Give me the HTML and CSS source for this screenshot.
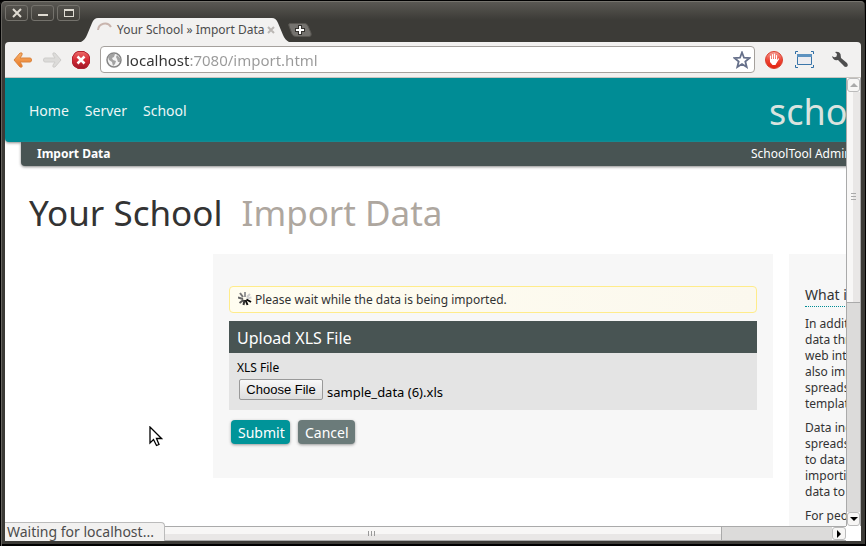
FILE: index.html
```html
<!DOCTYPE html>
<html lang="en">
<head>
<meta charset="utf-8">
<meta name="viewport" content="width=device-width, initial-scale=1">
<title>Your School » Import Data</title>
<link rel="stylesheet" href="styles.css">
</head>
<body>
<div class="window">
  <header class="titlebar">
    <div class="window-controls">
      <button type="button" aria-label="Close window"><svg width="10" height="10" viewBox="0 0 10 10"><path d="M1 1 9 9M9 1 1 9" stroke="#dfdbd2" stroke-width="2"/></svg></button>
      <button type="button" aria-label="Minimize window"><svg width="10" height="10" viewBox="0 0 10 10"><path d="M0 7H10" stroke="#dfdbd2" stroke-width="2"/></svg></button>
      <button type="button" aria-label="Maximize window"><svg width="10" height="10" viewBox="0 0 10 10"><path d="M0 1H10V9H0Z" fill="#dfdbd2"/><path d="M1 3H9V8H1Z" fill="#45433e"/></svg></button>
    </div>
    <div class="tab">
      <svg class="tab-shape" viewBox="0 0 210 24" preserveAspectRatio="none"><path d="M0 24Q4 22 6 17L11 5Q13 0 17 0H191Q195 0 197 5L202 17Q204 22 208 24Z" fill="#f2f1f0"/></svg>
      <svg class="tab-spinner" width="16" height="16" viewBox="0 0 16 16"><path d="M1 8A7 7 0 0 1 14 5" fill="none" stroke="#c9b5ae" stroke-width="2"/></svg>
      <span class="tab-title">Your School » Import Data</span>
      <button type="button" class="tab-close" aria-label="Close tab"><svg width="8" height="8" viewBox="0 0 8 8"><path d="M1 1 7 7M7 1 1 7" stroke="#bbb7b4" stroke-width="2"/></svg></button>
    </div>
    <button type="button" class="new-tab" aria-label="New tab"><svg width="24" height="14" viewBox="0 0 24 14"><path d="M2 .5H17Q19 .5 20 3L23 10Q24 13.500 21 13.500H8Q5 13.500 4 11L1 3Q0 .5 2 .5Z" fill="#75736f" stroke="#595752"/><path d="M12 2V12M7 7H17" stroke="#34322e" stroke-width="4"/><path d="M12 3V11M8 7H16" stroke="#fff" stroke-width="2"/></svg></button>
  </header>
  <nav class="toolbar" aria-label="Browser">
    <button type="button" aria-label="Back"><svg width="20" height="18" viewBox="0 0 20 18"><defs><linearGradient id="or" x1="0" y1="0" x2="0" y2="1"><stop offset="0" stop-color="#f9b26d"/><stop offset="1" stop-color="#e87722"/></linearGradient></defs><path d="M1 9 7 2Q10 1 9 4L7 7H17Q18.500 7 18.500 9T17 11H7L9 14Q10 17 7 16Z" fill="url(#or)" stroke="#d9843f"/></svg></button>
    <button type="button" aria-label="Forward"><svg width="20" height="18" viewBox="0 0 20 18"><path d="M19 9 13 2Q10 1 11 4L13 7H3Q1.500 7 1.500 9T3 11H13L11 14Q10 17 13 16Z" fill="#dcdbd9" stroke="#cecdcb"/></svg></button>
    <button type="button" aria-label="Stop"><svg width="20" height="20" viewBox="0 0 20 20"><defs><linearGradient id="rd" x1="0" y1="0" x2="0" y2="1"><stop offset="0" stop-color="#ed6b69"/><stop offset=".5" stop-color="#d52b36"/><stop offset="1" stop-color="#9e1828"/></linearGradient></defs><path d="M7 1.500H13Q18.500 4 18.500 7V13Q16 18.500 13 18.500H7Q1.500 16 1.500 13V7Q4 1.500 7 1.500Z" fill="url(#rd)" stroke="#b32431" stroke-linejoin="round"/><path d="M6.500 6.500 13.500 13.500M13.500 6.500 6.500 13.500" stroke="#fff" stroke-width="2.500"/></svg></button>
    <div class="address">
      <svg width="16" height="16" viewBox="0 0 16 16"><circle cx="8" cy="8" r="7" fill="#f3f3f3" stroke="#858585" stroke-width="1.500"/><path d="M2 5 5 2 9 2 8 5 6 6 7 8 10 9 9 12 7 14 6 10 3 8ZM11 3 14 6 14 10 12 10 11 7 10 5Z" fill="#a2a2a2"/></svg>
      <input type="text" aria-label="Address" value="localhost:7080/import.html">
      <button type="button" aria-label="Bookmark this page"><svg width="18" height="18" viewBox="0 0 18 18"><path d="M9 1.500 11 6.700 16.500 7 12.300 10.500 13.700 16 9 13 4.300 16 5.700 10.500 1.500 7 7 6.700Z" fill="#fff" stroke="#66708a" stroke-width="1.800"/></svg></button>
    </div>
    <button type="button" class="extension" aria-label="Ad blocker"><svg width="18" height="18" viewBox="0 0 18 18"><defs><linearGradient id="ab" x1="0" y1="0" x2="0" y2="1"><stop offset="0" stop-color="#f5a49c"/><stop offset=".5" stop-color="#ee4536"/><stop offset="1" stop-color="#e3200d"/></linearGradient></defs><circle cx="9" cy="9" r="8.500" fill="url(#ab)" stroke="#d9412f"/><path d="M5.500 5V9M7.500 3.500V9M9.500 3V9M11.500 4.500V9M13.500 8 11.500 11" stroke="#fff" stroke-width="1.200" stroke-linecap="round"/><path d="M5 8H12V11L10.500 14H7.500L5 11Z" fill="#fff"/></svg></button>
    <button type="button" class="extension" aria-label="Screen capture"><svg width="19" height="17" viewBox="0 0 19 17"><path d="M.5 3V.5H3M16 .5H18.500V3M18.500 14V16.500H16M3 16.500H.5V14" fill="none" stroke="#2f6ea5"/><path d="M2.500 3.500H16.500V13.500H2.500Z" fill="#ececf0" stroke="#3b76a9"/><path d="M2 3H17V6H2Z" fill="#5d92bf"/></svg></button>
    <button type="button" class="wrench" aria-label="Settings"><svg width="18" height="17" viewBox="0 0 18 17"><path d="M1 5Q3 7 5.500 5.500L6 3 4 1Q8 0 9.500 3L10 7 16 12Q18 15 15 16 13 16 12 14L7 9Q2 10 1 5Z" fill="#4e4e4e"/></svg></button>
  </nav>
  <div class="viewport">
    <div class="page">
      <header class="site-header">
        <nav class="site-nav" aria-label="Site"><a href="#">Home</a><a href="#">Server</a><a href="#">School</a></nav>
        <span class="brand">scho</span>
      </header>
      <div class="breadcrumbs"><strong>Import Data</strong><span>SchoolTool Admin</span></div>
      <h1>Your School <span>Import Data</span></h1>
      <div class="columns">
        <main class="panel">
          <p class="notice"><svg width="14" height="14" viewBox="0 0 14 14" fill="none" stroke-width="2"><path d="M7 5V0" stroke="#999"/><path d="M5 5 2 1" stroke="#777"/><path d="M9 5 12 2" stroke="#ccc"/><path d="M8.500 6.500 13.500 5.500" stroke="#d4d4d4"/><path d="M5 7 0 5.500" stroke="#666"/><path d="M5.500 8 1.500 11" stroke="#555"/><path d="M6.500 8 5.500 13" stroke="#333"/><path d="M7.500 8 9.500 13" stroke="#111"/><path d="M8.500 7.500 13 10" stroke="#000"/></svg>Please wait while the data is being imported.</p>
          <form>
            <h2>Upload XLS File</h2>
            <div class="fields">
              <label for="xls">XLS File</label>
              <div class="file-row"><input id="xls" class="file-input" type="file"><button type="button" class="choose">Choose File</button><span>sample_data (6).xls</span></div>
            </div>
            <div class="actions"><button type="submit" class="submit">Submit</button><button type="button" class="cancel">Cancel</button></div>
          </form>
        </main>
        <aside class="help">
          <h3>What i</h3>
          <p>In addit<br>data thr<br>web int<br>also imp<br>spreads<br>templat</p>
          <p>Data inc<br>spreads<br>to data<br>importi<br>data to</p>
          <p>For peo</p>
        </aside>
      </div>
    </div>
    <div class="vscroll" aria-hidden="true">
      <div class="arrow"><svg width="8" height="4" viewBox="0 0 8 4"><path d="M4 0 8 4H0Z" fill="#aaa"/></svg></div>
      <div class="vthumb"><i></i><i></i><i></i></div>
      <div class="vtrack"></div>
      <div class="arrow"><svg width="8" height="4" viewBox="0 0 8 4"><path d="M0 0H8L4 4Z"/></svg></div>
    </div>
    <div class="hscroll" aria-hidden="true">
      <div class="hthumb"><i></i><i></i><i></i></div>
      <div class="htrack"></div>
      <div class="arrow"><svg width="4" height="8" viewBox="0 0 4 8"><path d="M0 0 4 4 0 8Z"/></svg></div>
    </div>
    <div class="status" role="status">Waiting for localhost...</div>
    <svg class="pointer" width="14" height="21" viewBox="0 0 14 21"><path d="M1 1V17L4.500 13.500 7.500 19.500 10 18.500 7.500 12.500H12.500Z" fill="#fff" stroke="#000" stroke-width="1.300"/></svg>
  </div>
</div>
</body>
</html>
```
FILE: styles.css
```css
* { box-sizing: border-box; }
html, body { height: 100%; }
body { margin: 0; background: #000; color: #333; font-family: "Noto Sans", "Liberation Sans", sans-serif; font-size: 12px; line-height: 16px; overflow: hidden; }
button, input { font: inherit; }
button { padding: 0; border: 0; background: none; }
svg { display: block; flex: none; }
h1, h2, h3, p { margin: 0; font-weight: 400; }

.window { display: flex; flex-direction: column; height: 100vh; padding: 0 4px 5px 5px; background: #3c3b37; border: solid #000; border-width: 1px 1px 0 0; border-radius: 5px 5px 0 0; box-shadow: inset 1px 0 #000, inset 2px 1px #65635e, inset 0 -2px #000; }
.titlebar { display: flex; flex: none; height: 41px; margin: 0 -3px; padding-left: 3px; background: linear-gradient(#5a5853, #3c3b37 18px); border-top: 1px solid #76746e; border-radius: 4px 4px 0 0; }
.window-controls { display: flex; gap: 3px; padding-top: 3px; }
.window-controls button { display: grid; place-items: center; width: 23px; height: 16px; border: 1px solid #74726c; border-radius: 3px; background: linear-gradient(#54524d, #413f3a); }
.tab { position: relative; display: flex; align-items: center; width: 210px; height: 24px; margin: 16px 0 0 1px; padding: 0 16px; color: #4c4c4c; }
.tab-shape { position: absolute; inset: 0; width: 100%; height: 100%; }
.tab-spinner, .tab-title, .tab-close { position: relative; }
.tab-title { flex: 1; margin-left: 4px; white-space: nowrap; }
.new-tab { align-self: flex-start; margin-top: 21px; margin-left: -3px; }
.toolbar { display: flex; flex: none; align-items: center; height: 36px; padding-left: 8px; background: #f2f1f0; border-bottom: 1px solid #c9c5c0; border-radius: 4px 4px 0 0; }
.toolbar > button { margin-right: 9px; }
.address { display: flex; flex: 1; align-items: center; min-width: 0; height: 27px; margin-right: 10px; padding: 0 3px 0 5px; background: #fff; border: 1px solid #a5a19d; border-radius: 4px; }
.address input { flex: 1; min-width: 0; margin-left: 4px; padding: 0; border: 0; outline: 0; background: linear-gradient(90deg, #333 64px, #999 64px); background-clip: text; color: transparent; font-size: 15px; line-height: 20px; }
.toolbar .extension { margin-right: 12px; }
.toolbar .wrench { margin: 0 12px 0 5px; }

.viewport { position: relative; display: grid; flex: 1; grid-template: minmax(0, 1fr) 15px / minmax(0, 1fr) 15px; min-height: 0; background: #fff; }
.page { overflow: hidden; background: #fff; }
.site-header { display: flex; align-items: center; justify-content: space-between; height: 64px; min-width: 1000px; padding-left: 24px; background: #008c95; border-radius: 0 0 4px 4px; box-shadow: 0 1px 3px #888; }
.site-nav { display: flex; gap: 16px; padding-top: 2px; font-size: 14px; }
.site-nav a { color: #eef6f5; text-decoration: none; }
.brand { width: 236px; padding-top: 4px; color: #d9e3df; font-size: 36px; line-height: 48px; white-space: nowrap; }
.breadcrumbs { display: flex; align-items: center; justify-content: space-between; height: 24px; min-width: 960px; margin-left: 16px; padding-left: 16px; background: #485453; color: #fff; border-radius: 0 0 4px 4px; box-shadow: 0 1px 3px #888; }
.breadcrumbs span { width: 230px; white-space: nowrap; }
h1 { padding: 23px 24px 17px; color: #333; font-size: 35px; line-height: 48px; white-space: nowrap; }
h1 span { margin-left: 10px; color: #aea79f; }
.columns { display: grid; grid-template-columns: 560px 192px; gap: 16px; min-width: 976px; padding-left: 208px; align-items: start; }
.panel { padding: 32px 16px; background: #f7f7f7; }
.notice { display: flex; align-items: center; gap: 3px; height: 27px; padding: 1px 8px 0; background: linear-gradient(90deg, #fffdf0, #fbf8ee); border: 1px solid #ffec8b; border-radius: 4px; }
.notice svg { align-self: flex-start; margin-top: 4px; }
h2 { margin-top: 8px; padding: 5px 8px 3px; background: #485453; color: #fff; font-size: 16px; line-height: 24px; }
.fields { height: 57px; padding: 7px 8px; background: #e4e4e4; color: #000; }
.fields label { display: block; }
.file-row { display: flex; align-items: center; gap: 4px; height: 26px; margin: 1px 2px; }
.file-input { position: absolute; width: 1px; height: 1px; opacity: 0; }
.choose { flex: none; width: 84px; height: 21px; align-self: flex-start; margin-top: 2px; background: linear-gradient(#f8f8f8, #ddd); border: 1px solid #999; border-radius: 2px; font-family: "Liberation Sans", sans-serif; font-size: 13px; }
.file-row span { padding-top: 4px; font-size: 13px; }
.actions { display: flex; gap: 8px; padding: 10px 2px 2px; }
.actions button { height: 24px; padding: 1px 7px 0; border-radius: 4px; color: #fff; font-size: 14px; box-shadow: 0 1px 3px #999; }
.submit { background: #009499; }
.cancel { background: #6b7b7a; }
.actions .submit { width: 59px; }
.actions .cancel { width: 57px; }
.help { min-height: 300px; padding: 32px 16px; background: #f7f7f7; }
.help h3 { padding-bottom: 2px; border-bottom: 1px dotted #008c95; font-size: 14px; line-height: 18px; }
.help p { margin-top: 8px; }
.help h3 + p { margin-top: 9px; }

.vscroll { display: flex; grid-row: 1; grid-column: 2; flex-direction: column; border: solid #aaa; border-width: 0 1px; }
.arrow { display: grid; flex: none; place-items: center; width: 13px; height: 14px; background: #f7f6f5; border: 1px solid #bbb; border-radius: 3px; }
.vthumb { display: flex; flex: 210; flex-direction: column; align-items: center; justify-content: center; gap: 2px; background: linear-gradient(90deg, #f8f7f6 50%, #e9e7e6 50%); border-bottom: 1px solid #aaa; }
.vthumb i { width: 5px; height: 1px; background: #aaa; }
.vtrack { flex: 210; background: #dcdbda; }
.hscroll { display: flex; grid-row: 2; grid-column: 1; border: solid #aaa; border-width: 1px 0; }
.hthumb { display: flex; flex: 714; align-items: center; justify-content: center; gap: 2px; padding-left: 16px; background: linear-gradient(#f8f7f6 50%, #e9e7e6 50%); border-right: 1px solid #aaa; }
.hthumb i { width: 1px; height: 5px; background: #999; }
.htrack { flex: 112; background: #dcdbda; }
.hscroll .arrow { width: 14px; height: 13px; }
.status { position: absolute; bottom: 0; left: 0; width: 160px; height: 19px; padding-left: 2px; background: #f2f1f0; border: solid #bbb; border-width: 1px 1px 0 0; border-radius: 0 4px 0 0; color: #4c4c4c; font-size: 14px; line-height: 18px; white-space: nowrap; }
.pointer { position: absolute; top: 348px; left: 144px; }
```
